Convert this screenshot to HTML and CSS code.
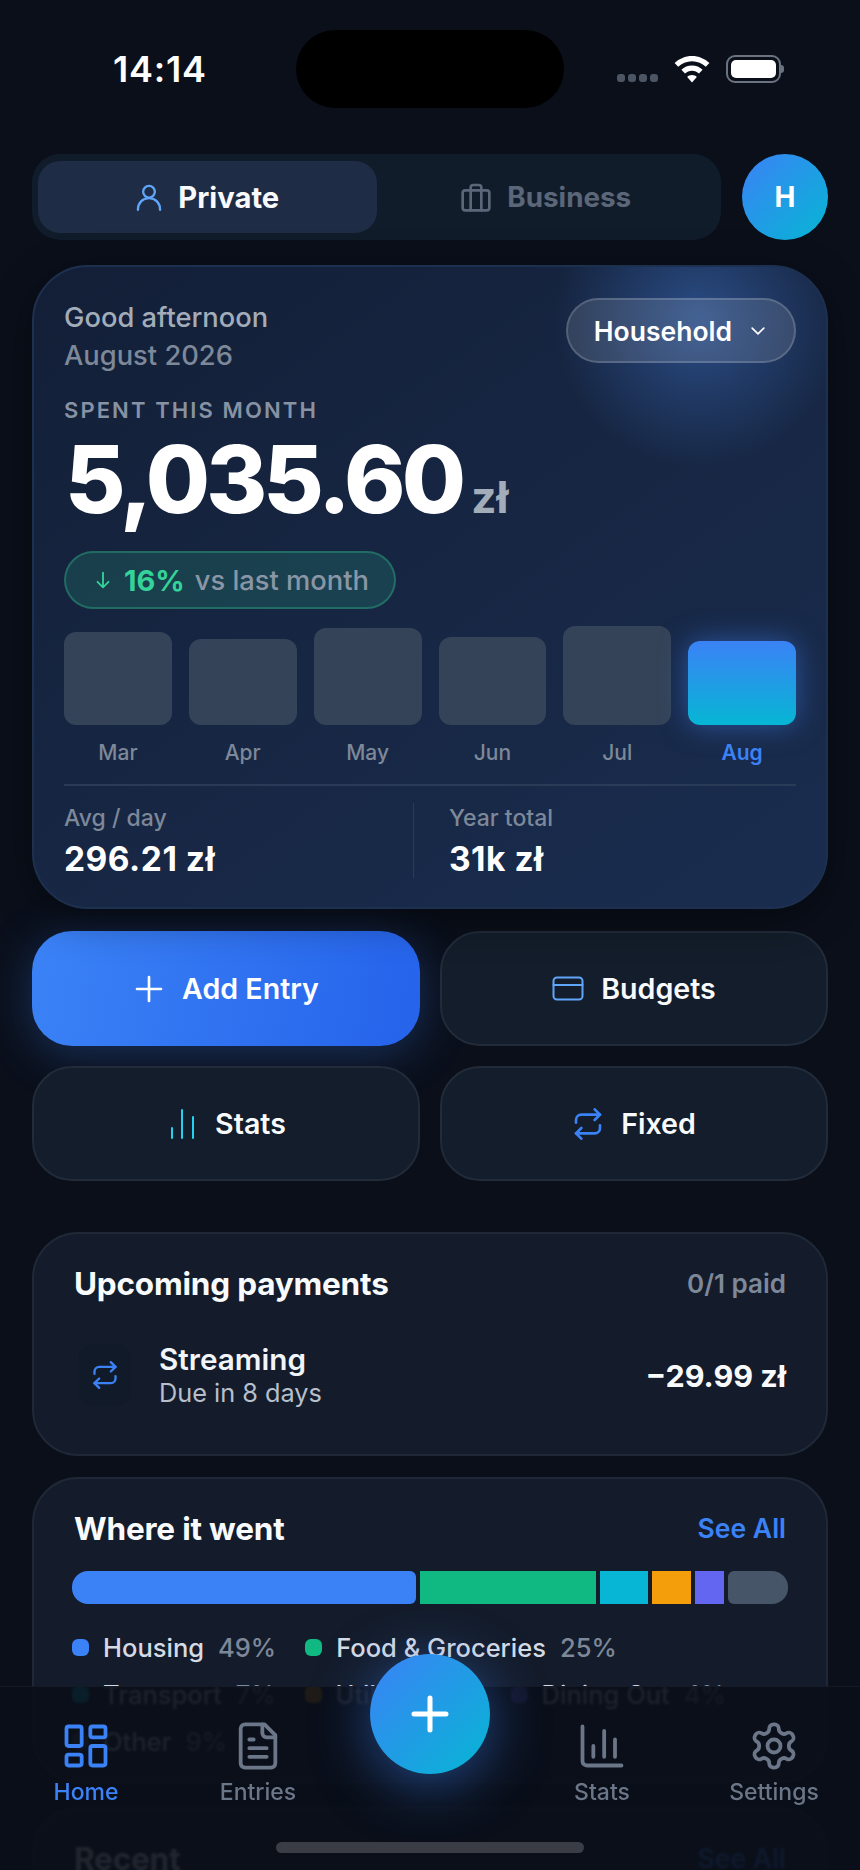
FILE: index.html
```html
<!DOCTYPE html>
<html lang="en">
<head>
<meta charset="utf-8">
<title>Home</title>
<link rel="stylesheet" href="styles.css">
</head>
<body>
<div class="screen">
  <header class="status">
    <div class="time">14:14</div>
    <div class="island"></div>
    <div class="status-icons">
      <div class="signal"><i></i><i></i><i></i><i></i></div>
      <svg class="wifi" viewBox="0 0 36 28"><path d="M18 1C11.200 1 5.200 3.700.6 8l3.600 3.800C7.800 8.400 12.600 6.300 18 6.300s10.200 2.100 13.800 5.500L35.400 8C30.800 3.700 24.800 1 18 1z"/><path d="M18 10.500c-4.100 0-7.800 1.600-10.600 4.200l3.600 3.800c1.800-1.700 4.300-2.800 7-2.800s5.200 1.100 7 2.800l3.600-3.800c-2.800-2.600-6.500-4.200-10.600-4.200z"/><path d="M18 20c-1.900 0-3.600.7-4.800 1.900L18 27.500l4.800-5.600C21.600 20.700 19.900 20 18 20z"/></svg>
      <div class="battery"><div class="battery-fill"></div></div>
    </div>
  </header>

  <section class="mode-row">
    <div class="toggle">
      <div class="toggle-tab is-active">
        <svg class="ico ico-28 blue-soft" viewBox="0 0 24 24"><circle cx="12" cy="7.500" r="5"/><path d="M2.500 23c0-6 4-10 9.500-10s9.500 4 9.500 10"/></svg>
        <span>Private</span>
      </div>
      <div class="toggle-tab">
        <svg class="ico ico-32" viewBox="0 0 24 24"><rect x="2" y="7" width="20" height="15" rx="2"/><path d="M16 22V5a2 2 0 0 0-2-2h-4a2 2 0 0 0-2 2v17"/></svg>
        <span>Business</span>
      </div>
    </div>
    <div class="avatar">H</div>
  </section>

  <section class="hero">
    <div class="hero-top">
      <div>
        <div class="greeting">Good afternoon</div>
        <div class="period">August 2026</div>
      </div>
      <div class="household">
        <span>Household</span>
        <svg class="ico ico-20" viewBox="0 0 24 24"><path d="m5 8.500 7 7 7-7"/></svg>
      </div>
    </div>
    <div class="eyebrow">SPENT THIS MONTH</div>
    <div class="total"><span class="total-num">5,035.60</span><span class="total-cur">zł</span></div>
    <div class="trend">
      <svg class="ico ico-22 green" viewBox="0 0 24 24"><path d="M12 4v16M6 14l6 6 6-6"/></svg>
      <b>16%</b><span>vs last month</span>
    </div>
    <div class="chart">
      <div class="col"><div class="bar-slot"><div class="bar" style="height:93px"></div></div><span>Mar</span></div>
      <div class="col"><div class="bar-slot"><div class="bar" style="height:86px"></div></div><span>Apr</span></div>
      <div class="col"><div class="bar-slot"><div class="bar" style="height:97px"></div></div><span>May</span></div>
      <div class="col"><div class="bar-slot"><div class="bar" style="height:88px"></div></div><span>Jun</span></div>
      <div class="col"><div class="bar-slot"><div class="bar" style="height:99px"></div></div><span>Jul</span></div>
      <div class="col is-current"><div class="bar-slot"><div class="bar" style="height:84px"></div></div><span>Aug</span></div>
    </div>
    <div class="hero-stats">
      <div class="stat"><div class="stat-label">Avg / day</div><div class="stat-value">296.21 zł</div></div>
      <div class="stat stat-second"><div class="stat-label">Year total</div><div class="stat-value">31k zł</div></div>
    </div>
  </section>

  <section class="actions">
    <div class="action action-primary">
      <svg class="ico ico-32" viewBox="0 0 24 24"><path d="M12 3v18M3 12h18"/></svg><span>Add Entry</span>
    </div>
    <div class="action">
      <svg class="ico ico-32 blue-soft" viewBox="0 0 32 32"><rect x="1.500" y="4.500" width="29" height="22" rx="3.500"/><path d="M1.500 12h29"/></svg><span>Budgets</span>
    </div>
    <div class="action">
      <svg class="ico ico-32 cyan" viewBox="0 0 32 32"><path d="M6 30V20M16 30V2M27 30V9"/></svg><span>Stats</span>
    </div>
    <div class="action">
      <svg class="ico ico-32 blue" viewBox="0 0 24 24"><path d="m17 1 4 4-4 4"/><path d="M3 11v-2a4 4 0 0 1 4-4h14"/><path d="m7 23-4-4 4-4"/><path d="M21 13v2a4 4 0 0 1-4 4H3"/></svg><span>Fixed</span>
    </div>
  </section>

  <section class="card upcoming">
    <div class="card-head">
      <h2>Upcoming payments</h2>
      <span class="muted-strong">0/1 paid</span>
    </div>
    <div class="payment">
      <div class="payment-icon">
        <svg class="ico ico-28 blue" viewBox="0 0 24 24"><path d="m17 1 4 4-4 4"/><path d="M3 11v-2a4 4 0 0 1 4-4h14"/><path d="m7 23-4-4 4-4"/><path d="M21 13v2a4 4 0 0 1-4 4H3"/></svg>
      </div>
      <div class="payment-text">
        <div class="payment-name">Streaming</div>
        <div class="payment-due">Due in 8 days</div>
      </div>
      <div class="payment-amount">−29.99 zł</div>
    </div>
  </section>

  <section class="card breakdown">
    <div class="card-head">
      <h2>Where it went</h2>
      <span class="see-all">See All</span>
    </div>
    <div class="stack">
      <div class="seg seg-housing"></div>
      <div class="seg seg-food"></div>
      <div class="seg seg-transport"></div>
      <div class="seg seg-util"></div>
      <div class="seg seg-dining"></div>
      <div class="seg seg-other"></div>
    </div>
    <div class="legend">
      <div class="legend-item"><i class="dot seg-housing"></i><span>Housing</span><em>49%</em></div>
      <div class="legend-item"><i class="dot seg-food"></i><span>Food &amp; Groceries</span><em>25%</em></div>
      <div class="legend-item"><i class="dot seg-transport"></i><span>Transport</span><em>7%</em></div>
      <div class="legend-item"><i class="dot seg-util"></i><span>Utilities</span><em>6%</em></div>
      <div class="legend-item"><i class="dot seg-dining"></i><span>Dining Out</span><em>4%</em></div>
      <div class="legend-item"><i class="dot seg-other"></i><span>Other</span><em>9%</em></div>
    </div>
  </section>

  <section class="card recent">
    <div class="card-head">
      <h2>Recent</h2>
      <span class="see-all">See All</span>
    </div>
  </section>

  <nav class="tabbar">
    <div class="tab is-active">
      <svg class="ico ico-52" viewBox="0 0 24 24"><rect x="3" y="3" width="7" height="9" rx="1"/><rect x="14" y="3" width="7" height="5" rx="1"/><rect x="14" y="12" width="7" height="9" rx="1"/><rect x="3" y="16" width="7" height="5" rx="1"/></svg>
      <span>Home</span>
    </div>
    <div class="tab">
      <svg class="ico ico-52" viewBox="0 0 24 24"><path d="M15 2H6a2 2 0 0 0-2 2v16a2 2 0 0 0 2 2h12a2 2 0 0 0 2-2V7z"/><path d="M14 2v4a2 2 0 0 0 2 2h4"/><path d="M10 9H8M16 13H8M16 17H8"/></svg>
      <span>Entries</span>
    </div>
    <div class="tab tab-spacer"></div>
    <div class="tab">
      <svg class="ico ico-52" viewBox="0 0 24 24"><path d="M3 3v16a2 2 0 0 0 2 2h16"/><path d="M8 17v-5M13 17V5M18 17V9"/></svg>
      <span>Stats</span>
    </div>
    <div class="tab">
      <svg class="ico ico-52" viewBox="0 0 24 24"><path d="M12.220 2h-.44a2 2 0 0 0-2 2v.18a2 2 0 0 1-1 1.730l-.43.25a2 2 0 0 1-2 0l-.15-.08a2 2 0 0 0-2.730.73l-.22.38a2 2 0 0 0 .73 2.730l.15.1a2 2 0 0 1 1 1.720v.51a2 2 0 0 1-1 1.740l-.15.09a2 2 0 0 0-.73 2.730l.22.38a2 2 0 0 0 2.730.73l.15-.08a2 2 0 0 1 2 0l.43.25a2 2 0 0 1 1 1.730V20a2 2 0 0 0 2 2h.44a2 2 0 0 0 2-2v-.18a2 2 0 0 1 1-1.730l.43-.25a2 2 0 0 1 2 0l.15.08a2 2 0 0 0 2.730-.73l.22-.39a2 2 0 0 0-.73-2.730l-.15-.08a2 2 0 0 1-1-1.740v-.5a2 2 0 0 1 1-1.740l.15-.09a2 2 0 0 0 .73-2.730l-.22-.38a2 2 0 0 0-2.730-.73l-.15.08a2 2 0 0 1-2 0l-.43-.25a2 2 0 0 1-1-1.730V4a2 2 0 0 0-2-2z"/><circle cx="12" cy="12" r="3"/></svg>
      <span>Settings</span>
    </div>
  </nav>
  <button class="fab" type="button" aria-label="Add">
    <svg class="ico fab-plus" viewBox="0 0 40 40"><path d="M20 4v32M4 20h32"/></svg>
  </button>
  <div class="home-indicator"></div>
</div>
</body>
</html>
```
FILE: styles.css
```css
* { box-sizing: border-box; }
html, body { margin: 0; padding: 0; background: #0a0f1a; }
body { font-family: Inter, "Liberation Sans", sans-serif; color: #f8fafc; }
.screen { position: relative; width: 860px; height: 1870px; overflow: hidden; background: #0a0f1a; }

.ico { fill: none; stroke: currentColor; stroke-width: 2; stroke-linecap: round; stroke-linejoin: round; flex: none; display: block; }
.ico-20 { width: 20px; height: 20px; }
.ico-22 { width: 22px; height: 22px; }
.ico-28 { width: 28px; height: 28px; }
.ico-32 { width: 32px; height: 32px; }
.ico-52 { width: 52px; height: 52px; stroke-width: 1.750; }
.blue { color: #3b82f6; }
.blue-soft { color: #60a5fa; }
.cyan { color: #22d3ee; }
.green { color: #34d399; }

.status { display: grid; grid-template-columns: 296px 268px 1fr; align-items: center; height: 78px; margin-top: 30px; }
.time { padding-left: 113px; font-size: 36px; font-weight: 600; color: #fff; letter-spacing: .8px; }
.island { height: 78px; background: #000; border-radius: 39px; }
.status-icons { display: flex; align-items: center; padding-left: 53px; }
.signal { display: flex; gap: 3px; margin-top: 18px; }
.signal i { width: 8px; height: 8px; border-radius: 3px; background: #4b5563; }
.wifi { width: 36px; height: 28px; margin-left: 16px; fill: #fff; }
.battery { position: relative; width: 55px; height: 28px; margin-left: 16px; padding: 3px; border: 2px solid #6b7280; border-radius: 9px; }
.battery::after { content: ""; position: absolute; right: -5px; top: 8px; width: 3px; height: 8px; border-radius: 0 3px 3px 0; background: #6b7280; }
.battery-fill { width: 100%; height: 100%; background: #fff; border-radius: 5px; }

.mode-row { display: flex; gap: 21px; margin: 46px 32px 0; }
.toggle { flex: 1; display: grid; grid-template-columns: 1fr 1fr; height: 86px; padding: 7px 6px; background: #111c2b; border-radius: 28px; }
.toggle-tab { display: flex; align-items: center; justify-content: center; gap: 15px; border-radius: 22px; font-size: 27.800px; font-weight: 700; color: #5b6779; }
.toggle-tab.is-active { background: #1f2c45; color: #f8fafc; font-size: 29.200px; }
.avatar { display: flex; align-items: center; justify-content: center; width: 86px; height: 86px; border-radius: 50%; background: linear-gradient(135deg, #3b82f6, #06b6d4); font-size: 28px; font-weight: 700; color: #fff; }

.hero { position: relative; height: 644px; margin: 25px 32px 0; padding: 32px 30px 0; border: 2px solid #1e3050; border-radius: 56px; background: radial-gradient(circle 145px at 665px 55px, rgba(59,110,190,.55), rgba(59,110,190,0)), linear-gradient(145deg, #131f37, #1a2d4f); box-shadow: 0 10px 40px rgba(0,0,0,.4); overflow: hidden; }
.hero-top { display: flex; justify-content: space-between; align-items: flex-start; }
.greeting { font-size: 27.300px; font-weight: 500; line-height: 38px; color: #a3adba; }
.period { font-size: 27.300px; font-weight: 500; line-height: 38px; color: #7d8899; }
.household { display: flex; align-items: center; gap: 16px; height: 65px; margin-top: -1px; padding: 0 26px; border: 2px solid rgba(255,255,255,.16); border-radius: 33px; background: rgba(255,255,255,.12); font-size: 26.500px; font-weight: 600; color: #fff; }
.eyebrow { margin-top: 21px; font-size: 22px; font-weight: 600; letter-spacing: 2.100px; line-height: 28px; color: #8792a3; }
.total { display: flex; align-items: baseline; gap: 9px; margin: 5px 0 0 1px; line-height: 100px; }
.total-num { font-size: 93px; font-weight: 800; letter-spacing: -3.900px; color: #fff; }
.total-cur { font-size: 44px; font-weight: 700; color: #a3adba; }
.trend { display: inline-flex; align-items: center; height: 58px; margin-top: 4px; padding: 0 25px 0 26px; border: 2px solid rgba(52,211,153,.3); border-radius: 29px; background: rgba(52,211,153,.16); font-size: 27.300px; font-weight: 500; color: #8a96a6; }
.trend b { margin: 0 10px 0 10px; font-size: 29px; font-weight: 700; color: #34d399; }
.chart { display: grid; grid-template-columns: repeat(6, 1fr); gap: 17px; margin-top: 16px; }
.col { display: flex; flex-direction: column; align-items: stretch; text-align: center; font-size: 21px; font-weight: 500; color: #7d8899; }
.bar-slot { display: flex; align-items: flex-end; height: 100px; }
.bar { width: 100%; border-radius: 12px; background: #354358; }
.col span { margin-top: 16px; line-height: 24px; }
.is-current .bar { background: linear-gradient(180deg, #3b82f6, #06b6d4); box-shadow: 0 0 28px rgba(59,130,246,.5); }
.is-current span { font-weight: 600; color: #3b82f6; }
.hero-stats { display: flex; margin-top: 19px; padding-top: 17px; border-top: 2px solid #2a3b58; }
.stat { width: 349px; }
.stat-second { padding-left: 35px; border-left: 1px solid #2a3b58; }
.stat-label { font-size: 23px; font-weight: 500; line-height: 30px; color: #7d8899; }
.stat-value { margin-top: 7px; font-size: 33.500px; font-weight: 700; line-height: 38px; color: #fff; letter-spacing: .5px; }

.actions { display: grid; grid-template-columns: 1fr 1fr; gap: 20px; margin: 22px 32px 0; }
.action { display: flex; align-items: center; justify-content: center; gap: 17px; height: 115px; border: 2px solid #212b39; border-radius: 40px; background: #131d2b; font-size: 28.600px; font-weight: 600; color: #f8fafc; }
.action-primary { border: 0; background: linear-gradient(100deg, #3b82f6, #2563eb); box-shadow: 0 8px 48px rgba(59,130,246,.3); color: #fff; }

.card { margin: 0 32px; padding: 29px 40px; border: 2px solid #1f2836; border-radius: 46px; background: #141c2b; }
.upcoming { height: 224px; margin-top: 51px; }
.breakdown { height: 306px; margin-top: 21px; }
.recent { height: 200px; margin-top: 24px; }
.card-head { display: flex; justify-content: space-between; align-items: center; height: 40px; }
.card h2 { margin: 0; font-size: 31.500px; font-weight: 700; color: #f8fafc; letter-spacing: -.2px; }
.muted-strong { font-size: 26px; font-weight: 600; color: #7d8899; }
.see-all { font-size: 26.500px; font-weight: 600; color: #3b82f6; }
.payment { display: flex; align-items: center; margin-top: 38px; }
.payment-icon { display: flex; align-items: center; justify-content: center; width: 52px; height: 62px; margin-left: 5px; border-radius: 14px; background: #111a29; }
.payment-text { flex: 1; margin-left: 28px; }
.payment-name { font-size: 29.700px; font-weight: 600; line-height: 36px; color: #f1f5f9; }
.payment-due { font-size: 25.300px; font-weight: 400; line-height: 32px; color: #b6bfcc; }
.payment-amount { font-size: 30.500px; font-weight: 700; color: #f8fafc; }

.stack { display: flex; gap: 4px; height: 33px; margin: 23px 0 0 -2px; width: 716px; border-radius: 16px; overflow: hidden; }
.seg-housing { background: #3b82f6; }
.seg-food { background: #10b981; }
.seg-transport { background: #06b6d4; }
.seg-util { background: #f59e0b; }
.seg-dining { background: #6366f1; }
.seg-other { background: #475569; }
.stack .seg-housing { width: 344px; border-radius: 0 6px 6px 0; }
.stack .seg-food { width: 176px; }
.stack .seg-transport { width: 48px; }
.stack .seg-util { width: 39px; }
.stack .seg-dining { width: 29px; }
.stack .seg-other { width: 60px; border-radius: 6px 0 0 6px; }
.legend { display: flex; flex-wrap: wrap; gap: 19px 29px; margin: 29px 0 0 -2px; width: 730px; }
.legend-item { display: flex; align-items: center; height: 28px; font-size: 25.500px; font-weight: 500; color: #d5dbe5; }
.legend-item em { margin-left: 14px; font-style: normal; color: #7d8899; }
.dot { width: 17px; height: 17px; margin-right: 14px; border-radius: 6px; }

.tabbar { position: absolute; left: 0; right: 0; top: 1686px; bottom: 0; display: grid; grid-template-columns: repeat(5, 172px); align-items: start; padding-top: 33px; background: rgba(10,14,24,.91); border-top: 1px solid #141a27; backdrop-filter: blur(.8px); }
.tab { display: flex; flex-direction: column; align-items: center; gap: 6px; font-size: 23px; font-weight: 500; color: #6b7688; }
.tab.is-active { color: #3b82f6; }
.fab { position: absolute; left: 370px; top: 1654px; display: flex; align-items: center; justify-content: center; width: 120px; height: 120px; padding: 0; border: 0; border-radius: 50%; background: linear-gradient(135deg, #3b82f6, #06b6d4); box-shadow: 0 10px 56px rgba(59,130,246,.5); color: #fff; }
.fab-plus { width: 40px; height: 40px; stroke-width: 5; }
.home-indicator { position: absolute; left: 276px; top: 1842px; width: 308px; height: 11px; border-radius: 6px; background: #3a3d45; }
```
